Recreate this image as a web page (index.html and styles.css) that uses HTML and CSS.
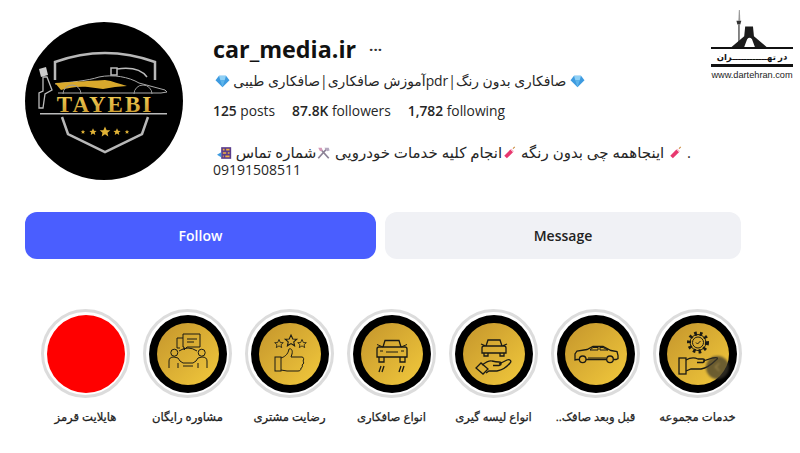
FILE: index.html
```html
<!DOCTYPE html>
<html lang="fa">
<head>
  <meta charset="UTF-8">
  <title>car_media.ir</title>
  <meta name="viewport" content="width=device-width, initial-scale=1.0">
  <link rel="stylesheet" href="styles.css">
</head>
<body>
  <svg class="hidden-defs" width="0" height="0">
    <defs>
      <linearGradient id="gold" x1="0" y1="0" x2="1" y2="1">
        <stop offset="0" stop-color="#c4952c"/>
        <stop offset="1" stop-color="#f2c93c"/>
      </linearGradient>
      <linearGradient id="goldText" x1="0" y1="0" x2="0" y2="1">
        <stop offset="0" stop-color="#f6d35a"/>
        <stop offset="1" stop-color="#c8962a"/>
      </linearGradient>
      <path id="star" d="M0-5 1.500-1.600 4.800-1.500 2.300.7 3 4 0 2.100-3 4-2.300.7-4.800-1.500-1.500-1.600z"/>
      <symbol id="gem" viewBox="0 0 16 16">
        <path d="M4 2h8l4 5-8 8-8-8z" fill="#3d9be0"/>
        <path d="M4 2h8l-1.500 5h-5z" fill="#8fd0f5"/>
        <path d="M5.500 7h5L8 15z" fill="#5db4ea"/>
      </symbol>
      <symbol id="cracker" viewBox="0 0 16 16">
        <path d="M2 11 9 4l3 3-7 7z" fill="#e8386f"/>
        <path d="M9 4l3 3 1-1-3-3z" fill="#f7b0c4"/>
        <path d="M12 3l2-2" stroke="#c9893a" stroke-width="1.200"/>
      </symbol>
      <symbol id="tools" viewBox="0 0 16 16">
        <path d="M2 14 11 4M14 14 5 4" stroke="#8c8296" stroke-width="2"/>
        <path d="M9 2h5l1 3-3 1z" fill="#b4a9c0"/>
        <path d="M2 2l4 0 1 3-3 1z" fill="#d49ab8"/>
      </symbol>
      <symbol id="abacus" viewBox="0 0 18 16">
        <rect x="5" y="1" width="12" height="14" fill="#5a3d8c"/>
        <path d="M7 4h2M11 4h4M7 8h4M13 8h2M7 12h1M10 12h5" stroke="#f0b040" stroke-width="2"/>
        <path d="M0 10l5-3v6z" fill="#3d9be0"/>
      </symbol>
    </defs>
  </svg>

  <!-- واترمارک بالا سمت راست -->
  <div class="watermark">
    <svg class="wm-art" viewBox="0 0 82 38" width="82" height="37">
      <path d="M27.500 0h1l.5 11h-2z" fill="#999"/>
      <path d="M25 11h5l-1 4h-3z" fill="#333"/>
      <rect x="26.800" y="15" width="1.600" height="21" fill="#666"/>
      <path d="M20 38 33 27l1-10h8l1 10 13 11H44l-3-8q-2.500-3-5 0l-3 8z" fill="#1c1c1c"/>
    </svg>
    <div class="wm-band" dir="rtl">در تهــــــــــــران</div>
    <div class="wm-url">www.dartehran.com</div>
  </div>

  <div class="page">

    <!-- پروفایل -->
    <div class="profile">
      <svg class="avatar" viewBox="0 0 158 158" width="158" height="158">
        <circle cx="79" cy="79" r="79" fill="#000"/>
        <path d="M30 58V40Q80 22 130 40V58" fill="none" stroke="#b8b8b8" stroke-width="2.500"/>
        <path d="M37 95l6 17 37 18 37-18 6-17" fill="none" stroke="#b8b8b8" stroke-width="2.500"/>
        <path d="M30 62c16-2 32-3 44-7 14-3 30 0 40 6l26 7 2 2-6 1H33" fill="none" stroke="#aaa" stroke-width="1"/>
        <path d="M30 61c14-1 30-2 50-3 8 1 14 4 22 6l-12 1-12 2-15-2c-10-1-20 1-27 3z" fill="#d9a92c"/>
        <path d="M38 72a9 9 0 0 1 18 0M109 72a9 9 0 0 1 18 0" fill="none" stroke="#999" stroke-width="1"/>
        <path d="M14 47l7-2 2 8-7 2z" fill="#ccc"/>
        <path d="M18 55v14l-4 2v15h4l2-14 7-4-5-13z" fill="none" stroke="#bbb" stroke-width="1.300"/>
        <path d="M86 46h6v7h-6zM92 47c14-2 24 0 30 8" fill="none" stroke="#bbb" stroke-width="1.500"/>
        <text class="avatar-name" x="80" y="90" text-anchor="middle" fill="url(#goldText)">TAYEBI</text>
        <rect x="15" y="91" width="127" height="1.500" fill="#bbb"/>
        <g fill="#e0b236">
          <use href="#star" transform="translate(80 110) scale(1.100)"/>
          <use href="#star" transform="translate(68 110) scale(.750)"/>
          <use href="#star" transform="translate(92 110) scale(.750)"/>
          <use href="#star" transform="translate(58 110) scale(.450)"/>
          <use href="#star" transform="translate(102 110) scale(.450)"/>
        </g>
      </svg>

      <div class="info">
        <div class="name-row">
          <h1>car_media.ir</h1>
          <span class="more">···</span>
        </div>
        <div class="tagline" dir="rtl"><svg class="emoji"><use href="#gem"/></svg> صافکاری بدون رنگ|pdrآموزش صافکاری|صافکاری طیبی <svg class="emoji"><use href="#gem"/></svg></div>
        <div class="stats">
          <span><b>125</b> posts</span>
          <span><b>87.8K</b> followers</span>
          <span><b>1,782</b> following</span>
        </div>
        <div class="bio" dir="rtl">. <svg class="emoji"><use href="#cracker"/></svg> اینجاهمه چی بدون رنگه <svg class="emoji"><use href="#cracker"/></svg>انجام کلیه خدمات خودرویی <svg class="emoji"><use href="#tools"/></svg>شماره تماس <svg class="emoji"><use href="#abacus"/></svg></div>
        <div class="phone">09191508511</div>
      </div>
    </div>

    <!-- دکمه ها -->
    <div class="actions">
      <a class="btn btn-follow">Follow</a>
      <a class="btn btn-message">Message</a>
    </div>

    <!-- هایلایت ها -->
    <div class="highlights">
      <div class="hl">
        <div class="ring"><div class="disc disc-red"></div></div>
        <div class="hl-label" dir="rtl">هایلایت قرمز</div>
      </div>

      <div class="hl">
        <div class="ring"><div class="disc">
          <svg class="art" viewBox="0 0 78 78">
            <circle class="fill" cx="39" cy="39" r="31"/>
            <path class="line" d="M34 23h-6v10h3"/>
            <path class="line" d="M34 19h17v13H38l-3 3v-3h-1z"/>
            <path class="line" d="M38 24h10M38 27h7"/>
            <circle class="line" cx="25.300" cy="37.700" r="3.500"/>
            <circle class="line" cx="52.700" cy="37.700" r="3.500"/>
            <path class="line" d="M20 53v-7q0-4 5-4t6 4l3 2h10l3-2q1-4 6-4t5 4v7"/>
            <path class="line" d="M30 36q9-6 18 0M29 48v5M49 48v5M34 51h10"/>
          </svg>
        </div></div>
        <div class="hl-label" dir="rtl">مشاوره رایگان</div>
      </div>

      <div class="hl">
        <div class="ring"><div class="disc">
          <svg class="art" viewBox="0 0 78 78">
            <circle class="fill" cx="39" cy="39" r="31"/>
            <use class="line scaled" href="#star" transform="translate(28 29) scale(.900)"/>
            <use class="line scaled" href="#star" transform="translate(40 26) scale(1.200)"/>
            <use class="line scaled" href="#star" transform="translate(51 29) scale(.900)"/>
            <rect class="line" x="24" y="42" width="6" height="14"/>
            <path class="line" d="M30 43c3-1 7-3 8-9 2-1 4 1 3 5l-1 3h11c2 0 2 3 1 4 1 1 1 3-1 4 1 1 0 3-1 3 0 2-1 3-3 3H36l-6-1"/>
          </svg>
        </div></div>
        <div class="hl-label" dir="rtl">رضایت مشتری</div>
      </div>

      <div class="hl">
        <div class="ring"><div class="disc">
          <svg class="art" viewBox="0 0 78 78">
            <circle class="fill" cx="39" cy="39" r="31"/>
            <path class="line thick" d="M30 32l2-6.500h14l2 6.500M26 32h26a2 2 0 0 1 2 2v8H24v-8a2 2 0 0 1 2-2z"/>
            <path class="line" d="M30 32l-6-2.500M48 32l6-2.500M33 37h12M27 36h3M48 36h3"/>
            <path class="line thick" d="M26 42v5h5v-5M47 42v5h5v-5"/>
            <path class="line thick" d="M28 51l-2 6M31 51l-2 6M48 51l-2 6M51 51l-2 6"/>
          </svg>
        </div></div>
        <div class="hl-label" dir="rtl">انواع صافکاری</div>
      </div>

      <div class="hl">
        <div class="ring"><div class="disc">
          <svg class="art" viewBox="0 0 78 78">
            <circle class="fill" cx="39" cy="39" r="31"/>
            <path class="line thick" d="M31 31l2-6h12l2 6M29 31h20a2 2 0 0 1 2 2v5H27v-5a2 2 0 0 1 2-2zM29 38v3h4v-3M45 38v3h4v-3M31 31l-5-2M47 31l5-2"/>
            <path class="line thick" d="M27 50c4-3 7-5 10-4 2 .5 4 1 7 1 3 0 3 3 0 3.500h-6M44 49l8-4c3-1 5 1 3 3-3 4-8 7-13 8h-8l-3 2"/>
            <path class="line thick" d="M26 48l-5 5 7 6 5-5z"/>
          </svg>
        </div></div>
        <div class="hl-label" dir="rtl">انواع لیسه گیری</div>
      </div>

      <div class="hl">
        <div class="ring"><div class="disc">
          <svg class="art" viewBox="0 0 78 78">
            <circle class="fill" cx="39" cy="39" r="31"/>
            <path class="line thick" d="M18 45v-6l2-3 10-1.500 6-3h10l8 4 6 1 1 4v3l-2 1H20z"/>
            <circle class="line thick bg" cx="25.700" cy="44.300" r="3.300"/>
            <circle class="line thick bg" cx="53" cy="44.300" r="3.300"/>
            <path class="line" d="M33 35l3-2.500h5v2.500zM43 32.500h3l5 2.500h-8zM31 43h18"/>
          </svg>
        </div></div>
        <div class="hl-label" dir="rtl">قبل وبعد صافک..</div>
      </div>

      <div class="hl">
        <div class="ring"><div class="disc">
          <svg class="art" viewBox="0 0 78 78">
            <circle class="fill" cx="39" cy="39" r="31"/>
            <circle class="line dashed" cx="39" cy="27.500" r="9"/>
            <circle class="line" cx="39" cy="27.500" r="8"/>
            <circle class="line" cx="39" cy="27.500" r="5.500"/>
            <path class="line" d="M37 27.500l1.500 1.500 3-3"/>
            <rect class="line thick" x="20" y="43" width="7" height="16"/>
            <path class="line thick" d="M27 45c5-3 8-3 12-1h5c2 0 2 3 0 3.500h-6M44 46l10-3c4-1 6 0 3 2-4 4-9 8-15 9H32l-5 2"/>
          </svg>
          <span class="blob"></span>
        </div></div>
        <div class="hl-label" dir="rtl">خدمات مجموعه</div>
      </div>
    </div>

  </div>
</body>
</html>
```

FILE: styles.css
```css
/* کلی */
body {
  margin: 0;
  background: #fff;
  color: #262626;
  font-family: "Open Sans", "DejaVu Sans", sans-serif;
}
.hidden-defs {
  display: block;
  height: 0;
}

.page {
  padding: 22px 59px 0 25px;
}

/* واترمارک */
.watermark {
  position: absolute;
  top: 10px;
  left: 711px;
  width: 82px;
  text-align: center;
}
.wm-art {
  display: block;
}
.wm-band {
  border-top: 2px solid #111;
  border-bottom: 3px solid #111;
  height: 15px;
  line-height: 15px;
  font-size: 8.500px;
  font-weight: bold;
  text-align: center;
  color: #111;
  white-space: nowrap;
}
.wm-url {
  margin-top: 3px;
  font-family: "Liberation Sans", sans-serif;
  font-size: 9.200px;
  color: #222;
  white-space: nowrap;
}

/* پروفایل */
.profile {
  display: flex;
  gap: 30px;
}
.avatar {
  flex: none;
  display: block;
}
.avatar-name {
  font-family: "Liberation Serif", serif;
  font-weight: bold;
  font-size: 23px;
  letter-spacing: 2px;
}
.info {
  padding-top: 11px;
  flex: 1;
}
.name-row {
  display: flex;
  align-items: center;
  gap: 13px;
  height: 32px;
}
h1 {
  margin: 0;
  font-size: 23.300px;
  font-weight: 700;
  color: #111;
}
.more {
  font-size: 15px;
  font-weight: bold;
  color: #333;
}
.tagline {
  margin-top: 5px;
  width: 372px;
  font-size: 13.900px;
  line-height: 22px;
  text-align: right;
  white-space: nowrap;
}
.emoji {
  width: 15px;
  height: 14px;
  vertical-align: -2px;
}
.stats {
  display: flex;
  gap: 17px;
  margin-top: 9px;
  font-size: 13.800px;
  line-height: 20px;
}
.stats b {
  font-weight: 600;
}
.bio {
  margin-top: 22px;
  width: 478px;
  font-size: 15px;
  line-height: 18px;
  text-align: right;
  white-space: nowrap;
}
.phone {
  font-size: 14px;
  line-height: 18px;
}

/* دکمه ها */
.actions {
  display: flex;
  gap: 9px;
  margin-top: 32px;
}
.btn {
  flex: 351;
  height: 47px;
  line-height: 48px;
  text-align: center;
  border-radius: 12px;
  font-size: 14px;
  font-weight: 600;
}
.btn-follow {
  background: #4a5eff;
  color: #fff;
}
.btn-message {
  flex: 356;
  background: #f0f1f5;
  color: #222;
}

/* هایلایت ها */
.highlights {
  display: flex;
  gap: 13px;
  margin: 50px 0 0 16px;
}
.hl {
  width: 89px;
  flex: none;
}
.ring {
  width: 89px;
  height: 89px;
  box-sizing: border-box;
  padding: 2.500px;
  border: 3px solid #dcdcdc;
  border-radius: 50%;
  background: #fff;
}
.disc {
  position: relative;
  width: 100%;
  height: 100%;
  background: #000;
  border-radius: 50%;
}
.disc-red {
  background: #f00;
}
.art {
  display: block;
  width: 100%;
  height: 100%;
}
.fill {
  fill: url(#gold);
}
.line {
  fill: none;
  stroke: #1a1a14;
  stroke-width: 1;
}
.thick {
  stroke-width: 1.300;
}
.scaled {
  stroke-width: 0.900;
}
.dashed {
  stroke-width: 4;
  stroke-dasharray: 2.500 3;
}
.bg {
  fill: #dcab33;
}
.blob {
  position: absolute;
  left: 47px;
  top: 41px;
  width: 23px;
  height: 23px;
  border-radius: 50%;
  background: rgba(60, 55, 45, 0.72);
  filter: blur(1px);
}
.blob::after {
  content: "";
  position: absolute;
  left: 10px;
  top: 8px;
  width: 5px;
  height: 5px;
  border-left: 1.500px solid #a08a50;
  border-bottom: 1.500px solid #a08a50;
  transform: rotate(45deg);
}
.hl-label {
  margin-top: 10px;
  font-size: 11.600px;
  -webkit-text-stroke: 0.25px #222;
  line-height: 18px;
  text-align: center;
  white-space: nowrap;
  color: #222;
}
```
